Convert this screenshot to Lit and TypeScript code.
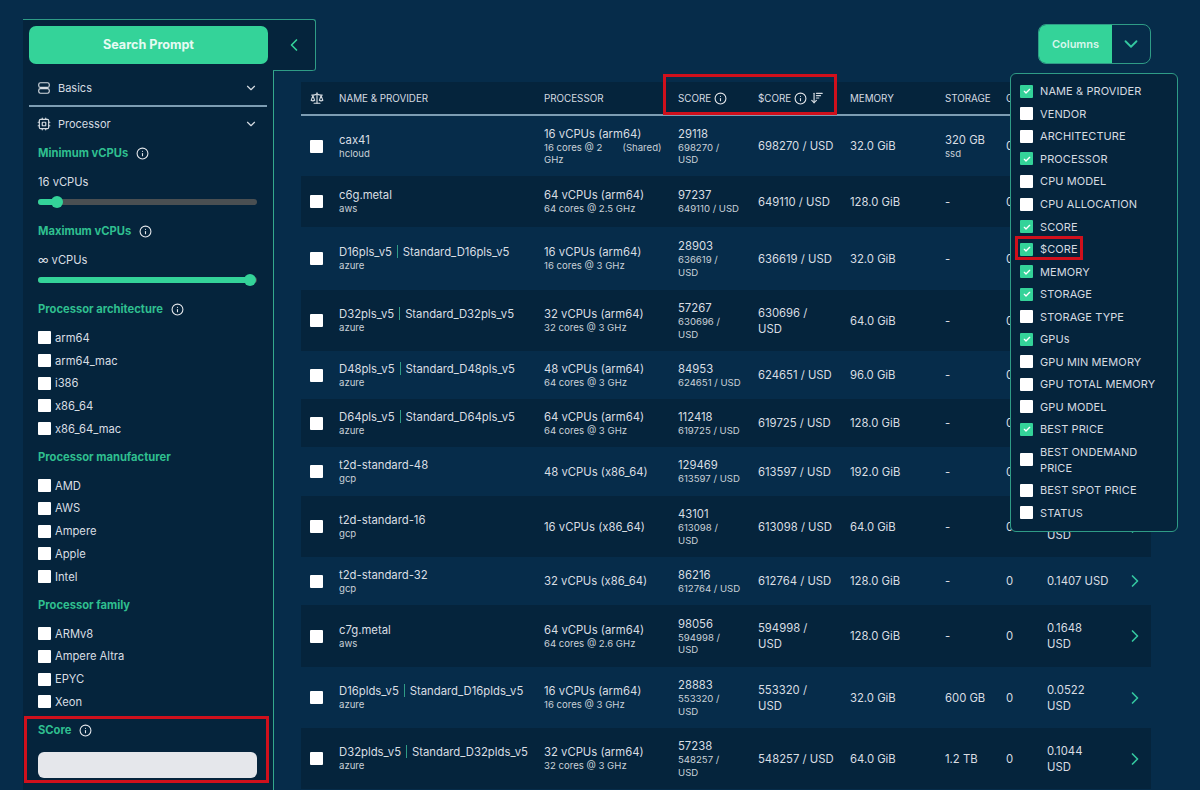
import { LitElement, html, css, svg } from 'lit';
import { customElement } from 'lit/decorators.js';

const icon = (body: unknown, size = 14, cls = '') => html`<svg class="icon ${cls}" width=${size} height=${size} viewBox="0 0 24 24" fill="none" stroke="currentColor" stroke-width="2" stroke-linecap="round" stroke-linejoin="round">${body}</svg>`;

const info = () => icon(svg`<circle cx="12" cy="12" r="10"/><path d="M12 16v-4"/><path d="M12 8h.01"/>`, 13, 'info');
const chevronDown = (size = 16) => icon(svg`<path d="m6 9 6 6 6-6"/>`, size);
const chevronRight = (size = 18) => icon(svg`<path d="m9 18 6-6-6-6"/>`, size);
const chevronLeft = (size = 20) => icon(svg`<path d="m15 18-6-6 6-6"/>`, size);
const scale = () => icon(svg`<path d="m16 16 3-8 3 8c-.87.65-1.92 1-3 1s-2.13-.35-3-1Z"/><path d="m2 16 3-8 3 8c-.87.65-1.92 1-3 1s-2.13-.35-3-1Z"/><path d="M7 21h10"/><path d="M12 3v18"/><path d="M3 7h2c2 0 5-1 7-2 2 1 5 2 7 2h2"/>`, 14);
const server = () => icon(svg`<rect x="3" y="3" width="18" height="8" rx="3"/><rect x="3" y="13" width="18" height="8" rx="3"/>`, 14);
const cpu = () => icon(svg`<rect x="4" y="4" width="16" height="16" rx="2"/><rect x="9" y="9" width="6" height="6" rx="1"/><path d="M15 2v2M15 20v2M2 15h2M2 9h2M20 15h2M20 9h2M9 2v2M9 20v2"/>`, 14);
const sortDown = () => icon(svg`<path d="m3 16 4 4 4-4"/><path d="M7 20V4"/><path d="M11 4h10"/><path d="M11 8h7"/><path d="M11 12h4"/>`, 14);

interface Row {
  name: string;
  alt?: string;
  vendor: string;
  cpu: string;
  cores?: unknown;
  score: string;
  perUsd: string;
  dollar: string;
  mem: string;
  storage: string;
  disk?: string;
  price: string;
  h: number;
}

// price cells of the first rows sit behind the open columns menu
const ROWS: Row[] = [
  { name: 'cax41', vendor: 'hcloud', cpu: '16 vCPUs (arm64)', cores: html`16 cores @ 2<span class="gap"></span>(Shared)<br />GHz`, score: '29118', perUsd: '698270 /\nUSD', dollar: '698270 / USD', mem: '32.0 GiB', storage: '320 GB', disk: 'ssd', price: '', h: 61 },
  { name: 'c6g.metal', vendor: 'aws', cpu: '64 vCPUs (arm64)', cores: '64 cores @ 2.5 GHz', score: '97237', perUsd: '649110 / USD', dollar: '649110 / USD', mem: '128.0 GiB', storage: '-', price: '', h: 51 },
  { name: 'D16pls_v5', alt: 'Standard_D16pls_v5', vendor: 'azure', cpu: '16 vCPUs (arm64)', cores: '16 cores @ 3 GHz', score: '28903', perUsd: '636619 /\nUSD', dollar: '636619 / USD', mem: '32.0 GiB', storage: '-', price: '', h: 63 },
  { name: 'D32pls_v5', alt: 'Standard_D32pls_v5', vendor: 'azure', cpu: '32 vCPUs (arm64)', cores: '32 cores @ 3 GHz', score: '57267', perUsd: '630696 /\nUSD', dollar: '630696 /\nUSD', mem: '64.0 GiB', storage: '-', price: '', h: 61 },
  { name: 'D48pls_v5', alt: 'Standard_D48pls_v5', vendor: 'azure', cpu: '48 vCPUs (arm64)', cores: '64 cores @ 3 GHz', score: '84953', perUsd: '624651 / USD', dollar: '624651 / USD', mem: '96.0 GiB', storage: '-', price: '', h: 48 },
  { name: 'D64pls_v5', alt: 'Standard_D64pls_v5', vendor: 'azure', cpu: '64 vCPUs (arm64)', cores: '64 cores @ 3 GHz', score: '112418', perUsd: '619725 / USD', dollar: '619725 / USD', mem: '128.0 GiB', storage: '-', price: '', h: 48 },
  { name: 't2d-standard-48', vendor: 'gcp', cpu: '48 vCPUs (x86_64)', score: '129469', perUsd: '613597 / USD', dollar: '613597 / USD', mem: '192.0 GiB', storage: '-', price: '', h: 49 },
  { name: 't2d-standard-16', vendor: 'gcp', cpu: '16 vCPUs (x86_64)', score: '43101', perUsd: '613098 /\nUSD', dollar: '613098 / USD', mem: '64.0 GiB', storage: '-', price: '\nUSD', h: 61 },
  { name: 't2d-standard-32', vendor: 'gcp', cpu: '32 vCPUs (x86_64)', score: '86216', perUsd: '612764 / USD', dollar: '612764 / USD', mem: '128.0 GiB', storage: '-', price: '0.1407 USD', h: 48 },
  { name: 'c7g.metal', vendor: 'aws', cpu: '64 vCPUs (arm64)', cores: '64 cores @ 2.6 GHz', score: '98056', perUsd: '594998 /\nUSD', dollar: '594998 /\nUSD', mem: '128.0 GiB', storage: '-', price: '0.1648\nUSD', h: 62 },
  { name: 'D16plds_v5', alt: 'Standard_D16plds_v5', vendor: 'azure', cpu: '16 vCPUs (arm64)', cores: '16 cores @ 3 GHz', score: '28883', perUsd: '553320 /\nUSD', dollar: '553320 /\nUSD', mem: '32.0 GiB', storage: '600 GB', price: '0.0522\nUSD', h: 61 },
  { name: 'D32plds_v5', alt: 'Standard_D32plds_v5', vendor: 'azure', cpu: '32 vCPUs (arm64)', cores: '32 cores @ 3 GHz', score: '57238', perUsd: '548257 /\nUSD', dollar: '548257 / USD', mem: '64.0 GiB', storage: '1.2 TB', price: '0.1044\nUSD', h: 61 },
];

const COLUMN_OPTIONS: [string, boolean][] = [
  ['NAME & PROVIDER', true],
  ['VENDOR', false],
  ['ARCHITECTURE', false],
  ['PROCESSOR', true],
  ['CPU MODEL', false],
  ['CPU ALLOCATION', false],
  ['SCORE', true],
  ['$CORE', true],
  ['MEMORY', true],
  ['STORAGE', true],
  ['STORAGE TYPE', false],
  ['GPUs', true],
  ['GPU MIN MEMORY', false],
  ['GPU TOTAL MEMORY', false],
  ['GPU MODEL', false],
  ['BEST PRICE', true],
  ['BEST ONDEMAND PRICE', false],
  ['BEST SPOT PRICE', false],
  ['STATUS', false],
];

const FILTER_GROUPS: { title: string; info?: boolean; items: string[] }[] = [
  { title: 'Processor architecture', info: true, items: ['arm64', 'arm64_mac', 'i386', 'x86_64', 'x86_64_mac'] },
  { title: 'Processor manufacturer', items: ['AMD', 'AWS', 'Ampere', 'Apple', 'Intel'] },
  { title: 'Processor family', items: ['ARMv8', 'Ampere Altra', 'EPYC', 'Xeon'] },
];

@customElement('app-root')
export class AppRoot extends LitElement {
  static styles = css`
    :host {
      display: block;
      position: relative;
      height: 790px;
      overflow: hidden;
      background: #062c4a;
      color: #e5e7eb;
      font-family: Inter, 'Liberation Sans', sans-serif;
      font-size: 12.5px;
    }
    .icon {
      display: block;
      flex: none;
    }
    .page {
      display: flex;
      height: 790px;
    }

    /* sidebar */
    .sidebar {
      width: 251px;
      margin: 19px 0 0 23px;
      flex: none;
      box-sizing: border-box;
      background: #05243c;
      border-right: 1px solid #34a88c;
    }
    .top {
      display: flex;
      width: 293px;
      height: 52px;
      box-sizing: border-box;
      background: #05243c;
      border-top: 1px solid #2f9c86;
      border-right: 1px solid #2f9c86;
      border-radius: 0 3px 3px 0;
    }
    .search {
      width: 239px;
      height: 38px;
      padding-bottom: 1px;
      box-sizing: border-box;
      margin: 6px 5px 0 6px;
      flex: none;
      display: flex;
      align-items: center;
      justify-content: center;
      background: #34d399;
      border-radius: 7px;
      color: #e6fbf3;
      font-weight: 700;
      font-size: 12.6px;
    }
    .toggle {
      flex: 1;
      display: flex;
      align-items: center;
      padding-left: 11px;
      color: #34d399;
      border-bottom: 1px solid #2f9c86;
      border-radius: 0 0 3px 0;
    }
    .section {
      display: flex;
      align-items: center;
      gap: 7px;
      padding: 0 15px 0 14px;
      height: 34px;
      color: #d5dbe1;
      font-size: 11px;
    }
    .section .label {
      flex: 1;
    }
    .rule {
      height: 2px;
      margin: 0 6px 0 6px;
      background: #7d9db3;
    }
    .filters {
      padding: 4px 16px 0 15px;
    }
    .title {
      display: flex;
      align-items: center;
      gap: 8px;
      color: #2fbf8f;
      font-weight: 700;
      font-size: 11.2px;
      line-height: 16px;
    }
    .info {
      color: #e5e7eb;
    }
    .value {
      margin-top: 13px;
      font-size: 11.2px;
      line-height: 16px;
      color: #d9dee3;
    }
    .slider {
      position: relative;
      height: 6px;
      margin: 9px 0 18px;
      background: #4a4f52;
      border-radius: 3px;
    }
    .slider .fill {
      height: 6px;
      background: #34d399;
      border-radius: 3px;
    }
    .slider .thumb {
      position: absolute;
      top: -3px;
      width: 12px;
      height: 12px;
      margin-left: -6px;
      border-radius: 50%;
      background: #34d399;
    }
    .group {
      margin-bottom: 9px;
    }
    .group .title {
      margin-bottom: 9.5px;
    }
    .check-item {
      display: flex;
      align-items: center;
      gap: 4px;
      height: 22.7px;
      font-size: 11.2px;
      color: #d9dee3;
    }
    .box {
      width: 13px;
      height: 13px;
      flex: none;
      display: flex;
      align-items: center;
      justify-content: center;
      background: #fff;
      border-radius: 1px;
    }
    .box.on {
      background: #34d399;
      color: #fff;
    }
    .score-input {
      height: 26px;
      margin-top: 14px;
      background: #e5e7eb;
      border-radius: 6px;
    }

    /* main */
    .main {
      flex: 1;
      min-width: 0;
      padding: 24px 49px 0 27px;
    }
    .bar {
      position: relative;
      display: flex;
      justify-content: flex-end;
      height: 58px;
    }
    .columns {
      display: flex;
      width: 113px;
      height: 40px;
      box-sizing: border-box;
      border: 1px solid #2f9c86;
      border-radius: 8px;
      overflow: hidden;
    }
    .columns .go {
      width: 73px;
      display: flex;
      align-items: center;
      justify-content: center;
      background: #34d399;
      color: #d8f7ec;
      font-size: 11px;
      font-weight: 600;
    }
    .columns .arrow {
      flex: 1;
      display: flex;
      align-items: center;
      justify-content: center;
      color: #34c7a0;
    }
    .menu {
      position: absolute;
      top: 49px;
      left: 709px;
      z-index: 2;
      width: 168px;
      box-sizing: border-box;
      padding: 6px 9px 7px 9px;
      background: #05243c;
      border: 1px solid #2f9c86;
      border-radius: 6px;
    }
    .menu .opt {
      display: flex;
      align-items: center;
      gap: 7px;
      min-height: 22.55px;
      box-sizing: border-box;
      padding: 3px 0;
      font-size: 11px;
      line-height: 16px;
      letter-spacing: 0.1px;
      color: #d5dbe1;
    }
    table {
      width: 850px;
      border-collapse: collapse;
      table-layout: fixed;
    }
    th {
      height: 32px;
      padding: 0 0 0 10px;
      background: #05243c;
      border-bottom: 2px solid #7d9db3;
      text-align: left;
      font-weight: 400;
      font-size: 9.8px;
      color: #d5dbe1;
      white-space: nowrap;
      overflow: hidden;
    }
    th:first-child {
      padding-left: 9px;
    }
    .head {
      display: flex;
      align-items: center;
      gap: 3px;
    }
    td {
      padding: 8px 0 8px 10px;
      vertical-align: middle;
      line-height: 16px;
      font-size: 11.3px;
      color: #d9dee3;
    }
    td:first-child {
      padding-left: 9px;
    }
    tbody tr:nth-child(even) td {
      background: #05243c;
    }
    .pre {
      white-space: pre;
    }
    .small {
      display: block;
      font-size: 9.6px;
      line-height: 12.5px;
      color: #c9d1d8;
    }
    .sep {
      display: inline-block;
      width: 1px;
      height: 13px;
      margin: 0 5px;
      vertical-align: -2px;
      background: #2f9c86;
    }
    .gap {
      display: inline-block;
      width: 20px;
    }
    td.go-row {
      padding-left: 4px;
      color: #34c7a0;
    }

    /* annotations painted over the screenshot */
    .mark {
      position: absolute;
      z-index: 3;
      box-sizing: border-box;
      border: 3px solid #d0101c;
      pointer-events: none;
    }
    .mark.a {
      left: 24px;
      top: 716px;
      width: 245px;
      height: 67px;
    }
    .mark.b {
      left: 663px;
      top: 74px;
      width: 174px;
      height: 41px;
    }
    .mark.c {
      left: 1015px;
      top: 236px;
      width: 68px;
      height: 24px;
    }
  `;

  private renderBox(on = false) {
    return html`<span class="box ${on ? 'on' : ''}">
      ${on ? html`<svg width="8" height="8" viewBox="0 0 24 24" fill="none" stroke="currentColor" stroke-width="4" stroke-linecap="round" stroke-linejoin="round"><path d="M4 13l5 5L20 7" /></svg>` : ''}
    </span>`;
  }

  private renderSlider(pct: number) {
    return html`<div class="slider">
      <div class="fill" style="width:${pct}%"></div>
      <div class="thumb" style="left:${pct}%"></div>
    </div>`;
  }

  private renderSidebar() {
    return html`<aside class="sidebar">
      <div class="top">
        <div class="search">Search Prompt</div>
        <div class="toggle">${chevronLeft(20)}</div>
      </div>
      <div class="section">${server()}<span class="label">Basics</span>${chevronDown(14)}</div>
      <div class="rule"></div>
      <div class="section">${cpu()}<span class="label">Processor</span>${chevronDown(14)}</div>
      <div class="filters">
        <div class="title">Minimum vCPUs ${info()}</div>
        <div class="value">16 vCPUs</div>
        ${this.renderSlider(8.5)}
        <div class="title">Maximum vCPUs ${info()}</div>
        <div class="value">∞ vCPUs</div>
        ${this.renderSlider(97)}
        ${FILTER_GROUPS.map(
          (g) => html`<div class="group">
            <div class="title">${g.title} ${g.info ? info() : ''}</div>
            ${g.items.map((i) => html`<div class="check-item">${this.renderBox()}<span>${i}</span></div>`)}
          </div>`,
        )}
        <div class="title">SCore ${info()}</div>
        <div class="score-input"></div>
      </div>
    </aside>`;
  }

  private renderRow(r: Row) {
    return html`<tr style="height:${r.h}px">
      <td>${this.renderBox()}</td>
      <td>
        ${r.name}${r.alt ? html`<span class="sep"></span>${r.alt}` : ''}
        <span class="small">${r.vendor}</span>
      </td>
      <td>${r.cpu}${r.cores ? html`<span class="small">${r.cores}</span>` : ''}</td>
      <td>${r.score}<span class="small pre">${r.perUsd}</span></td>
      <td class="pre">${r.dollar}</td>
      <td>${r.mem}</td>
      <td>${r.storage}${r.disk ? html`<span class="small">${r.disk}</span>` : ''}</td>
      <td>0</td>
      <td class="pre">${r.price}</td>
      <td class="go-row">${chevronRight(20)}</td>
    </tr>`;
  }

  private renderTable() {
    return html`<table>
      <colgroup>
        ${[28, 205, 134, 80, 92, 95, 61, 41, 84, 30].map((w) => html`<col style="width:${w}px" />`)}
      </colgroup>
      <thead>
        <tr>
          <th>${scale()}</th>
          <th>NAME &amp; PROVIDER</th>
          <th>PROCESSOR</th>
          <th><span class="head">SCORE ${info()}</span></th>
          <th><span class="head">$CORE ${info()} ${sortDown()}</span></th>
          <th>MEMORY</th>
          <th>STORAGE</th>
          <th>GPUs</th>
          <th></th>
          <th></th>
        </tr>
      </thead>
      <tbody>
        ${ROWS.map((r) => this.renderRow(r))}
      </tbody>
    </table>`;
  }

  render() {
    return html`<div class="page">
        ${this.renderSidebar()}
        <main class="main">
          <div class="bar">
            <div class="columns">
              <div class="go">Columns</div>
              <div class="arrow">${chevronDown(22)}</div>
            </div>
            <div class="menu">
              ${COLUMN_OPTIONS.map(([label, on]) => html`<div class="opt">${this.renderBox(on)}<span>${label}</span></div>`)}
            </div>
          </div>
          ${this.renderTable()}
        </main>
      </div>
      <div class="mark a"></div>
      <div class="mark b"></div>
      <div class="mark c"></div>`;
  }
}
